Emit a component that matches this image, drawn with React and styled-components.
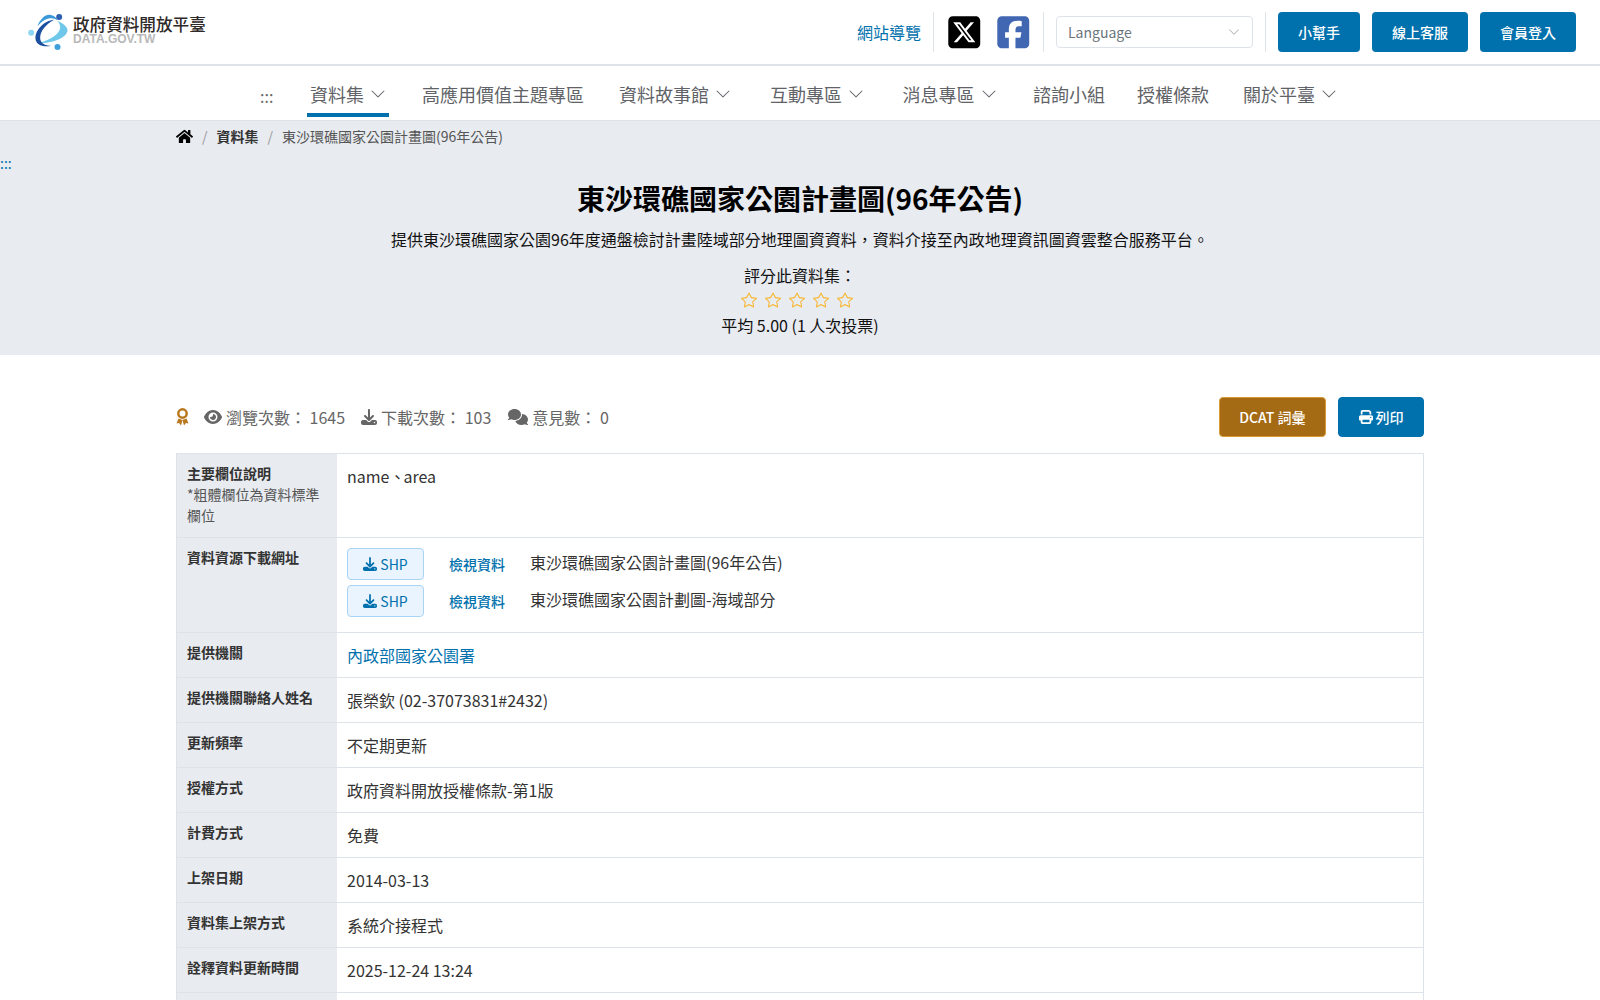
import React from "react";
import styled, { createGlobalStyle } from "styled-components";
import { FaHome, FaRegStar } from "react-icons/fa";
import { FaEye, FaDownload, FaComments, FaPrint, FaSquareXTwitter, FaSquareFacebook } from "react-icons/fa6";
import { BsChevronDown, BsStar } from "react-icons/bs";

const blue = "#0071ad";

const GlobalStyle = createGlobalStyle`
    html, body {
        margin: 0;
        padding: 0;
        background: #fff;
        color: #212529;
        font-family: "Noto Sans CJK TC", "Noto Sans", sans-serif;
        font-size: 16px;
        overflow: hidden;
    }
`;

const Page = styled.div`
    width: 1600px;
    height: 1000px;
    overflow: hidden;
`;

const TopBar = styled.header`
    height: 66px;
    box-sizing: border-box;
    border-bottom: 2px solid #dee2e9;
    display: flex;
    align-items: center;
    justify-content: space-between;
    padding: 0 24px;
`;

const Logo = styled.div`
    display: flex;
    align-items: center;
    gap: 2px;
`;

const LogoText = styled.div`
    display: flex;
    flex-direction: column;
    padding-bottom: 5px;
`;

const LogoName = styled.span`
    font-size: 16.6px;
    line-height: 20px;
    font-weight: 500;
    color: #2f2a28;
`;

const LogoSub = styled.span`
    font-family: "Liberation Sans", Arial, sans-serif;
    font-size: 12px;
    line-height: 11px;
    font-weight: 700;
    color: #b9b9b9;
`;

const TopActions = styled.div`
    display: flex;
    align-items: center;
    height: 40px;
`;

const SiteMap = styled.a`
    color: ${blue};
    font-size: 16px;
    padding-right: 12px;
`;

const Divider = styled.span`
    width: 1px;
    height: 40px;
    background: #dee2e9;
`;

const Socials = styled.div`
    display: flex;
    align-items: center;
    gap: 12px;
    padding: 0 12px;
`;

const LangSelect = styled.div`
    width: 197px;
    height: 32px;
    box-sizing: border-box;
    margin: 0 12px;
    padding: 0 12px 0 11px;
    border: 1px solid #dee2e9;
    border-radius: 4px;
    display: flex;
    align-items: center;
    justify-content: space-between;
    font-size: 14px;
    color: #6c757d;
`;

const TopButtons = styled.div`
    display: flex;
    gap: 12px;
    margin-left: 12px;
`;

const TopButton = styled.button`
    height: 40px;
    padding: 0 20px;
    border: none;
    border-radius: 4px;
    background: ${blue};
    color: #fff;
    font-family: inherit;
    font-size: 14px;
    font-weight: 500;
`;

const Nav = styled.nav`
    height: 55px;
    box-sizing: border-box;
    border-bottom: 1px solid #dee2e9;
    display: flex;
    justify-content: center;
    color: #5f6368;
    font-size: 18px;
`;

const NavMark = styled.span`
    width: 47px;
    height: 51px;
    padding-top: 9px;
    box-sizing: border-box;
    font-size: 16px;
    line-height: 42px;
    color: #666;
`;

const NavItem = styled.a`
    display: flex;
    align-items: center;
    gap: 6px;
    height: 51px;
    padding: 9px 3px 0;
    margin-right: ${(p) => p.$gap}px;
    box-sizing: border-box;
    border-bottom: 4px solid ${(p) => (p.$active ? blue : "transparent")};
`;

const Hero = styled.section`
    height: 234px;
    background: #e8ebf0;
    position: relative;
    display: flex;
    flex-direction: column;
    align-items: center;
`;

const SkipMark = styled.span`
    position: absolute;
    left: 0;
    top: 34px;
    color: ${blue};
    font-size: 14px;
    line-height: 16px;
`;

const Crumbs = styled.div`
    align-self: flex-start;
    margin-left: 176px;
    height: 30px;
    display: flex;
    align-items: center;
    gap: 9px;
    font-size: 14px;
    color: #555;
`;

const CrumbStrong = styled.span`
    font-weight: 700;
    color: #333;
`;

const CrumbSlash = styled.span`
    color: #999;
`;

const HeroTitle = styled.h1`
    margin: 27px 0 0;
    font-size: 28px;
    line-height: 40px;
    font-weight: 700;
    color: #000;
`;

const HeroText = styled.p`
    margin: 9px 0 0;
    font-size: 16px;
    line-height: 24px;
    color: #111;
`;

const RateLabel = styled(HeroText)`
    margin-top: 12px;
`;

const RateAverage = styled(HeroText)`
    margin-top: 1px;
`;

const Stars = styled.div`
    display: flex;
    gap: 8px;
    padding-right: 6px;
    margin-top: 1px;
    color: #f7b733;
    font-size: 16px;
    height: 24px;
    align-items: center;
`;

const Content = styled.main`
    width: 1248px;
    margin: 0 auto;
`;

const Toolbar = styled.div`
    height: 40px;
    margin: 42px 0 16px;
    display: flex;
    align-items: center;
    justify-content: space-between;
`;

const Stats = styled.div`
    display: flex;
    align-items: center;
    color: #666;
    font-size: 16px;
`;

const Stat = styled.span`
    display: inline-flex;
    align-items: center;
    gap: 4px;
    margin-left: ${(p) => p.$gap}px;
`;

const ToolButtons = styled.div`
    display: flex;
    gap: 12px;
`;

const ToolButton = styled.button`
    height: 40px;
    padding: 0 19.5px;
    border: 1px solid ${(p) => p.$border || blue};
    border-radius: 4px;
    background: ${(p) => p.$bg || blue};
    color: #fff;
    font-family: inherit;
    font-size: 14px;
    font-weight: 500;
    display: inline-flex;
    align-items: center;
    gap: 3px;
`;

const Table = styled.div`
    border: 1px solid #dee2e9;
    border-bottom: none;
`;

const Row = styled.div`
    display: grid;
    grid-template-columns: 160px 1fr;
    min-height: 44px;
    border-bottom: 1px solid #dee2e9;
`;

const Head = styled.div`
    background: #e8ebf0;
    padding: 9px 10px 11px;
    font-size: 14px;
    line-height: 21px;
    font-weight: 700;
    color: #333;
`;

const HeadNote = styled.div`
    font-weight: 400;
    color: #555;
`;

const Cell = styled.div`
    padding: 10px;
    font-size: 16px;
    line-height: 24px;
    color: #333;
`;

const CellLink = styled.a`
    color: ${blue};
`;

const Separator = styled.span`
    margin-right: -2px;
`;

const ResourceRow = styled.div`
    display: flex;
    align-items: center;
    height: 32px;
    margin-bottom: 5px;
`;

const ShpButton = styled.button`
    width: 77px;
    height: 32px;
    border: 1px solid #a8d4f5;
    border-radius: 4px;
    background: #eaf4fe;
    color: ${blue};
    font-family: inherit;
    font-size: 14px;
    display: inline-flex;
    align-items: center;
    justify-content: center;
    gap: 3px;
`;

const ViewLink = styled.a`
    margin: 0 25px;
    color: ${blue};
    font-size: 14px;
    font-weight: 500;
`;

const ResourceName = styled.span`
    margin-bottom: 5px;
`;

const navItems = [
    { label: "資料集", arrow: true, active: true, gap: 30 },
    { label: "高應用價值主題專區", gap: 29 },
    { label: "資料故事館", arrow: true, gap: 33 },
    { label: "互動專區", arrow: true, gap: 32.5 },
    { label: "消息專區", arrow: true, gap: 30.5 },
    { label: "諮詢小組", gap: 26 },
    { label: "授權條款", gap: 28 },
    { label: "關於平臺", arrow: true, gap: 0 },
];

const rows = [
    { head: "提供機關", link: "內政部國家公園署" },
    { head: "提供機關聯絡人姓名", text: "張榮欽 (02-37073831#2432)" },
    { head: "更新頻率", text: "不定期更新" },
    { head: "授權方式", text: "政府資料開放授權條款-第1版" },
    { head: "計費方式", text: "免費" },
    { head: "上架日期", text: "2014-03-13" },
    { head: "資料集上架方式", text: "系統介接程式" },
    { head: "詮釋資料更新時間", text: "2025-12-24 13:24" },
];

const resources = ["東沙環礁國家公園計畫圖(96年公告)", "東沙環礁國家公園計劃圖-海域部分"];

function LogoMark() {
    return (
        <svg width="47" height="40" viewBox="60 35 140 120">
            <path d="M105 128C150 130 190 110 190 90 190 78 175 68 160 62 172 75 172 92 150 108 135 118 120 124 105 128z" fill="#6fc8ea" />
            <path d="M150 58C120 60 92 90 94 115 95 132 115 142 142 136 122 136 108 128 108 112 108 92 125 72 150 58z" fill="#1c4fa0" />
            <path d="M100 78C108 55 125 40 140 44 150 46 158 52 160 60 145 48 120 52 100 78z" fill="#3a9ad9" />
            <circle cx="165" cy="50" r="9" fill="#2d5fb0" />
            <circle cx="81" cy="97" r="9" fill="#8fd6f0" />
            <circle cx="160" cy="140" r="9" fill="#3f9fdc" />
        </svg>
    );
}

function AwardMark() {
    return (
        <svg width="13" height="18" viewBox="0 0 13 18">
            <circle cx="6.5" cy="5.5" r="4.2" fill="none" stroke="#b8791f" strokeWidth="2.5" />
            <path d="M2.5 10.5 0.5 15.5 3 15 5 17.5 6.5 12 8 17.5 10 15 12.5 15.5 10.5 10.5 6.5 12z" fill="#b8791f" />
        </svg>
    );
}

export default function App() {
    return (
        <Page>
            <GlobalStyle />
            <TopBar>
                <Logo>
                    <LogoMark />
                    <LogoText>
                        <LogoName>政府資料開放平臺</LogoName>
                        <LogoSub>DATA.GOV.TW</LogoSub>
                    </LogoText>
                </Logo>
                <TopActions>
                    <SiteMap>網站導覽</SiteMap>
                    <Divider />
                    <Socials>
                        <FaSquareXTwitter size={36.5} color="#000" />
                        <FaSquareFacebook size={36.5} color="#4267b2" />
                    </Socials>
                    <Divider />
                    <LangSelect>
                        Language
                        <BsChevronDown size={12} color="#aaa" />
                    </LangSelect>
                    <Divider />
                    <TopButtons>
                        <TopButton>小幫手</TopButton>
                        <TopButton>線上客服</TopButton>
                        <TopButton>會員登入</TopButton>
                    </TopButtons>
                </TopActions>
            </TopBar>
            <Nav>
                <NavMark>:::</NavMark>
                {navItems.map((item) => (
                    <NavItem key={item.label} $active={item.active} $gap={item.gap}>
                        {item.label}
                        {item.arrow && <BsChevronDown size={16} />}
                    </NavItem>
                ))}
            </Nav>
            <Hero>
                <SkipMark>:::</SkipMark>
                <Crumbs>
                    <FaHome size={17} color="#000" />
                    <CrumbSlash>/</CrumbSlash>
                    <CrumbStrong>資料集</CrumbStrong>
                    <CrumbSlash>/</CrumbSlash>
                    東沙環礁國家公園計畫圖(96年公告)
                </Crumbs>
                <HeroTitle>東沙環礁國家公園計畫圖(96年公告)</HeroTitle>
                <HeroText>提供東沙環礁國家公園96年度通盤檢討計畫陸域部分地理圖資資料，資料介接至內政地理資訊圖資雲整合服務平台。</HeroText>
                <RateLabel>評分此資料集：</RateLabel>
                <Stars>
                    <BsStar />
                    <BsStar />
                    <BsStar />
                    <BsStar />
                    <BsStar />
                </Stars>
                <RateAverage>平均 5.00 (1 人次投票)</RateAverage>
            </Hero>
            <Content>
                <Toolbar>
                    <Stats>
                        <AwardMark />
                        <Stat $gap={15}><FaEye size={18} />瀏覽次數： 1645</Stat>
                        <Stat $gap={16}><FaDownload size={16} />下載次數： 103</Stat>
                        <Stat $gap={17}><FaComments size={20} />意見數： 0</Stat>
                    </Stats>
                    <ToolButtons>
                        <ToolButton $bg="#a46a14" $border="#d99a35">DCAT 詞彙</ToolButton>
                        <ToolButton><FaPrint size={14} />列印</ToolButton>
                    </ToolButtons>
                </Toolbar>
                <Table>
                    <Row>
                        <Head>
                            主要欄位說明
                            <HeadNote>*粗體欄位為資料標準欄位</HeadNote>
                        </Head>
                        <Cell>name<Separator>、</Separator>area</Cell>
                    </Row>
                    <Row>
                        <Head>資料資源下載網址</Head>
                        <Cell>
                            {resources.map((name) => (
                                <ResourceRow key={name}>
                                    <ShpButton><FaDownload size={14} />SHP</ShpButton>
                                    <ViewLink>檢視資料</ViewLink>
                                    <ResourceName>{name}</ResourceName>
                                </ResourceRow>
                            ))}
                        </Cell>
                    </Row>
                    {rows.map((row) => (
                        <Row key={row.head}>
                            <Head>{row.head}</Head>
                            <Cell>{row.link ? <CellLink>{row.link}</CellLink> : row.text}</Cell>
                        </Row>
                    ))}
                    <Row>
                        <Head />
                        <Cell />
                    </Row>
                </Table>
            </Content>
        </Page>
    );
}
